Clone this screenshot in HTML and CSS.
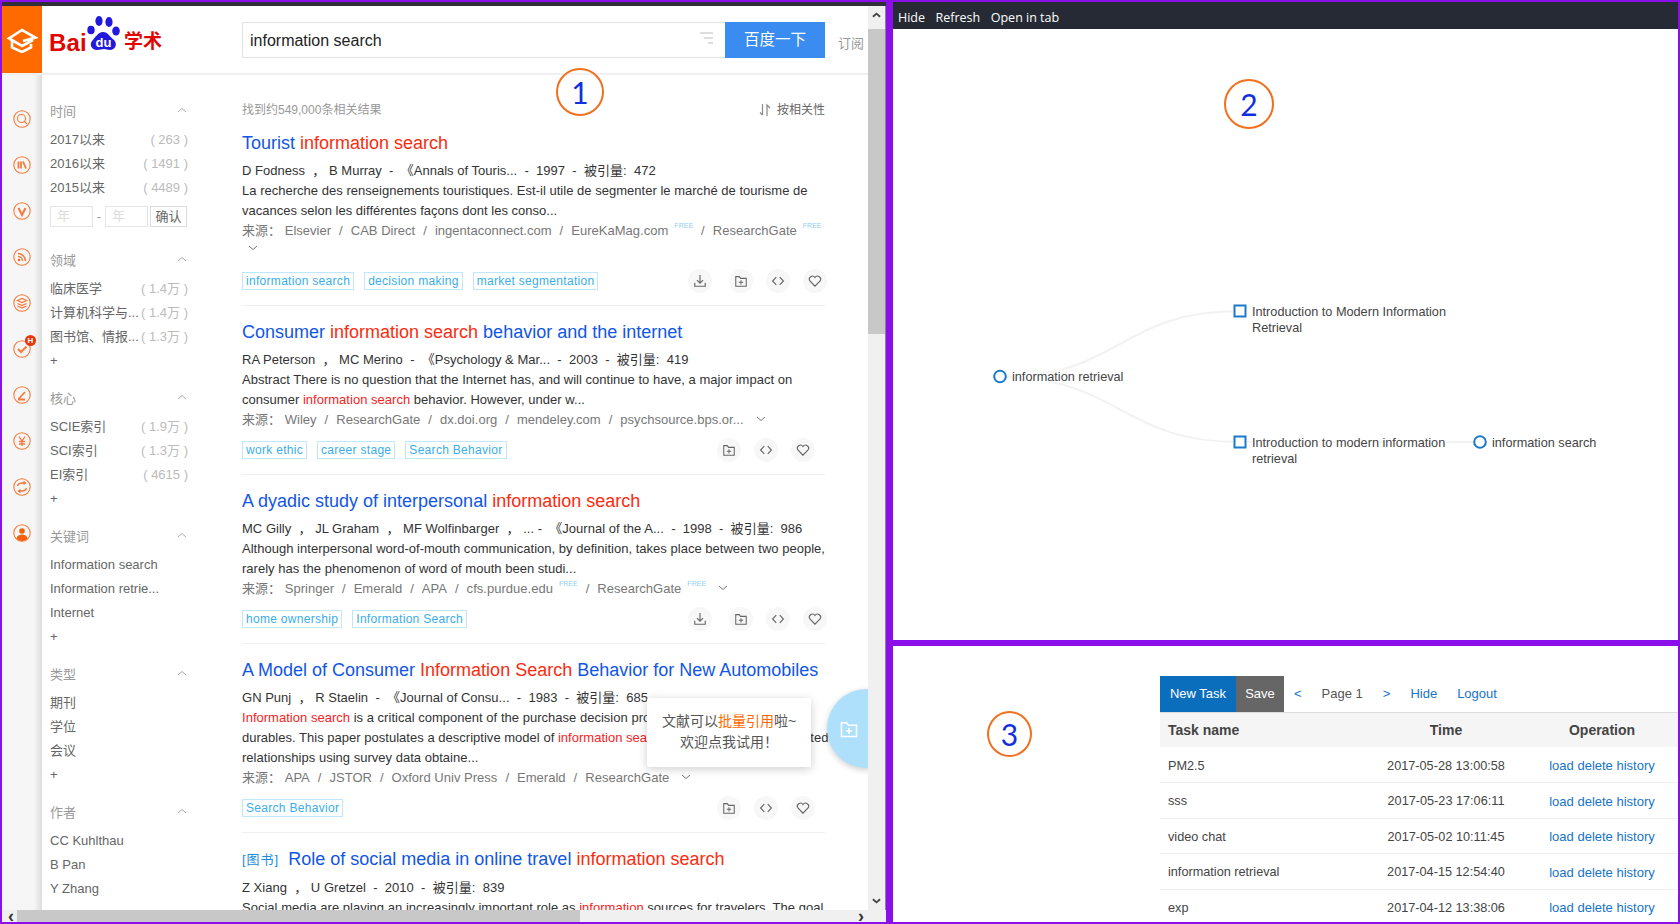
FILE: index.html
```html
<!DOCTYPE html>
<html lang="en">
<head>
    <meta charset="UTF-8">
    <meta name="viewport" content="width=device-width, initial-scale=1.0">
    <title>Literature search workspace</title>
    <link rel="stylesheet" href="styles.css">
</head>
<body>
<svg class="sprite" width="0" height="0">
    <symbol id="i-download" viewBox="0 0 16 16"><path d="M8 1v9M4.500 7 8 10.500 11.500 7M2 10v4h12v-4" fill="none" stroke="currentColor" stroke-width="1.300"/></symbol>
    <symbol id="i-folder" viewBox="0 0 16 16"><path d="M2 3h4l1.500 2H14v9H2zM8 7v5M5.500 9.500h5" fill="none" stroke="currentColor" stroke-width="1.200"/></symbol>
    <symbol id="i-code" viewBox="0 0 16 16"><path d="M6 3.500 1.800 8 6 12.500M10 3.500 14.200 8 10 12.500" fill="none" stroke="currentColor" stroke-width="1.300"/></symbol>
    <symbol id="i-heart" viewBox="0 0 16 16"><path d="M8 14 2.200 8A3.500 3.500 0 0 1 8 4a3.500 3.500 0 0 1 5.800 4z" fill="none" stroke="currentColor" stroke-width="1.300"/></symbol>
    <symbol id="i-up" viewBox="0 0 10 6"><path d="M1 5 5 1.500 9 5" fill="none" stroke="currentColor"/></symbol>
    <symbol id="i-down" viewBox="0 0 10 6"><path d="M1 1 5 4.500 9 1" fill="none" stroke="currentColor"/></symbol>
</svg>

<div class="frame">
    <div class="pane-left">
        <div class="viewport">
            <div class="page-head">
                <div class="brand-cell">
                    <svg width="32" height="26" viewBox="0 0 32 26"><path d="M27 13 16 19 3 11.500 16 3 29.500 10.500 17 14M6 13v7.500L16 25l9-4.500v-3.500" fill="none" stroke="#fff" stroke-width="2.600"/></svg>
                </div>
                <div class="logo">
                    <span class="logo-bai">Bai</span>
                    <svg class="logo-paw" width="34" height="38" viewBox="0 0 34 38">
                        <ellipse cx="4" cy="15" rx="3.700" ry="4.300" fill="#2319dc"/>
                        <ellipse cx="12" cy="6" rx="3.600" ry="5" fill="#2319dc"/>
                        <ellipse cx="22" cy="7" rx="3.600" ry="5" fill="#2319dc"/>
                        <ellipse cx="29" cy="16" rx="3.800" ry="4.500" fill="#2319dc"/>
                        <path d="M16 17c5 0 7 5 11 8 4 4 1 10-4 10-3 0-4-1-6-1s-4 1-7 1c-5 0-8-5-5-9 3-3 6-9 11-9z" fill="#2319dc"/>
                        <text x="16.500" y="32" class="logo-du">du</text>
                    </svg>
                    <span class="logo-xs">学术</span>
                </div>
                <div class="search">
                    <div class="search-box">
                        <span>information search</span>
                        <svg width="14" height="14" viewBox="0 0 14 14"><path d="M0 2h13M4 7h9M8 12h5" stroke="#ddd" stroke-width="2"/></svg>
                    </div>
                    <div class="search-btn">百度一下</div>
                </div>
                <div class="subscribe">订阅</div>
            </div>

            <div class="page-body">
                <div class="rail">
                    <svg class="rail-icon" viewBox="0 0 18 18"><circle cx="9" cy="9" r="8.200"/><circle cx="8.500" cy="8.500" r="4"/><path d="m11.500 11.500 2.500 2.500"/></svg>
                    <svg class="rail-icon" viewBox="0 0 18 18"><circle cx="9" cy="9" r="8.200"/><path d="M5.500 5.500v7M8 5.500v7M10 5.500l3 7" stroke-width="1.800"/></svg>
                    <svg class="rail-icon" viewBox="0 0 18 18"><circle cx="9" cy="9" r="8.200"/><path d="M5.500 6 9 13l3.500-7" stroke-width="2"/></svg>
                    <svg class="rail-icon" viewBox="0 0 18 18"><circle cx="9" cy="9" r="8.200"/><path d="M5 5.500c4 0 7.500 3.500 7.500 7.500M5 8.500c2.500 0 4.500 2 4.500 4.500" stroke-width="1.500"/><circle cx="6" cy="12" r="1.200" class="solid"/></svg>
                    <svg class="rail-icon" viewBox="0 0 18 18"><circle cx="9" cy="9" r="8.200"/><path d="m4.500 6.500 4.500-2 4.500 2-4.500 2zM4.500 9.500l4.500 2 4.500-2M4.500 12l4.500 2 4.500-2" stroke-width="1.300"/></svg>
                    <div class="rail-badged">
                        <svg class="rail-icon" viewBox="0 0 18 18"><circle cx="9" cy="9" r="8.200"/><path d="m5 9 3 3 5.500-5.500" stroke-width="2"/></svg>
                        <span class="badge">H</span>
                    </div>
                    <svg class="rail-icon" viewBox="0 0 18 18"><circle cx="9" cy="9" r="8.200"/><path d="M5.500 13 12 6M5 13.500h7" stroke-width="1.800"/></svg>
                    <svg class="rail-icon" viewBox="0 0 18 18"><circle cx="9" cy="9" r="8.200"/><path d="M6 4.500 9 9l3-4.500M9 9v5M6 9.500h6M6 12h6" stroke-width="1.300"/></svg>
                    <svg class="rail-icon" viewBox="0 0 18 18"><circle cx="9" cy="9" r="8.200"/><path d="M4.500 8c.5-2 2-3 4.500-3h3M10.500 3.500l2 1.500-2 1.500M13.500 10c-.5 2-2 3-4.500 3H6M7.500 11.500l-2 1.500 2 1.500" stroke-width="1.400"/></svg>
                    <svg class="rail-icon" viewBox="0 0 18 18"><circle cx="9" cy="9" r="8.200"/><circle cx="9" cy="7" r="2.800" class="solid"/><path d="M3.500 14.500c.5-3 3-4 5.500-4s5 1 5.500 4c-1.500 1.500-3.500 2.500-5.500 2.500s-4-1-5.500-2.500z" class="solid"/></svg>
                </div>

                <div class="facets">
                    <div class="facet facet-time">
                        <h4>时间<svg><use href="#i-up"/></svg></h4>
                        <div class="facet-row"><span>2017以来</span><em>( 263 )</em></div>
                        <div class="facet-row"><span>2016以来</span><em>( 1491 )</em></div>
                        <div class="facet-row"><span>2015以来</span><em>( 4489 )</em></div>
                        <div class="year-range">
                            <span class="year-input">年</span>
                            <span class="year-dash">-</span>
                            <span class="year-input">年</span>
                            <span class="year-ok">确认</span>
                        </div>
                    </div>
                    <div class="facet">
                        <h4>领域<svg><use href="#i-up"/></svg></h4>
                        <div class="facet-row"><span>临床医学</span><em>( 1.4万 )</em></div>
                        <div class="facet-row"><span>计算机科学与...</span><em>( 1.4万 )</em></div>
                        <div class="facet-row"><span>图书馆、情报...</span><em>( 1.3万 )</em></div>
                        <div class="facet-row">+</div>
                    </div>
                    <div class="facet">
                        <h4>核心<svg><use href="#i-up"/></svg></h4>
                        <div class="facet-row"><span>SCIE索引</span><em>( 1.9万 )</em></div>
                        <div class="facet-row"><span>SCI索引</span><em>( 1.3万 )</em></div>
                        <div class="facet-row"><span>EI索引</span><em>( 4615 )</em></div>
                        <div class="facet-row">+</div>
                    </div>
                    <div class="facet">
                        <h4>关键词<svg><use href="#i-up"/></svg></h4>
                        <div class="facet-row"><span>Information search</span></div>
                        <div class="facet-row"><span>Information retrie...</span></div>
                        <div class="facet-row"><span>Internet</span></div>
                        <div class="facet-row">+</div>
                    </div>
                    <div class="facet">
                        <h4>类型<svg><use href="#i-up"/></svg></h4>
                        <div class="facet-row"><span>期刊</span></div>
                        <div class="facet-row"><span>学位</span></div>
                        <div class="facet-row"><span>会议</span></div>
                        <div class="facet-row">+</div>
                    </div>
                    <div class="facet">
                        <h4>作者<svg><use href="#i-up"/></svg></h4>
                        <div class="facet-row"><span>CC Kuhlthau</span></div>
                        <div class="facet-row"><span>B Pan</span></div>
                        <div class="facet-row"><span>Y Zhang</span></div>
                    </div>
                </div>

                <div class="results">
                    <div class="stats">
                        <span>找到约549,000条相关结果</span>
                        <span class="sort"><svg width="12" height="14" viewBox="0 0 12 14"><path d="M3.500 1v11M1 9.500 3.500 12M8 13V2l3 3" fill="none" stroke="#888" stroke-width="1.200"/></svg>按相关性</span>
                    </div>

                    <div class="result">
                        <h3><a>Tourist <b>information search</b></a></h3>
                        <p>D Fodness &nbsp;， B Murray &nbsp;- &nbsp;《Annals of Touris... &nbsp;- &nbsp;1997 &nbsp;- &nbsp;被引量: &nbsp;472</p>
                        <p>La recherche des renseignements touristiques. Est-il utile de segmenter le marché de tourisme de<br>vacances selon les différentes façons dont les conso...</p>
                        <p class="sources">来源： <i>Elsevier</i>/<i>CAB Direct</i>/<i>ingentaconnect.com</i>/<i>EureKaMag.com</i><sup>FREE</sup>/<i>ResearchGate</i><sup>FREE</sup></p>
                        <div class="more-line"><svg class="chev"><use href="#i-down"/></svg></div>
                        <div class="result-foot">
                            <span class="tag">information search</span><span class="tag">decision making</span><span class="tag">market segmentation</span>
                            <span class="actions">
                                <span class="act act-dl"><svg><use href="#i-download"/></svg></span>
                                <span class="act"><svg><use href="#i-folder"/></svg></span>
                                <span class="act"><svg><use href="#i-code"/></svg></span>
                                <span class="act"><svg><use href="#i-heart"/></svg></span>
                            </span>
                        </div>
                    </div>

                    <div class="result">
                        <h3><a>Consumer <b>information search</b> behavior and the internet</a></h3>
                        <p>RA Peterson &nbsp;， MC Merino &nbsp;- &nbsp;《Psychology &amp; Mar... &nbsp;- &nbsp;2003 &nbsp;- &nbsp;被引量: &nbsp;419</p>
                        <p>Abstract There is no question that the Internet has, and will continue to have, a major impact on<br>consumer <b>information search</b> behavior. However, under w...</p>
                        <p class="sources">来源： <i>Wiley</i>/<i>ResearchGate</i>/<i>dx.doi.org</i>/<i>mendeley.com</i>/<i>psychsource.bps.or...</i><svg class="chev"><use href="#i-down"/></svg></p>
                        <div class="result-foot">
                            <span class="tag">work ethic</span><span class="tag">career stage</span><span class="tag">Search Behavior</span>
                            <span class="actions actions-short">
                                <span class="act"><svg><use href="#i-folder"/></svg></span>
                                <span class="act"><svg><use href="#i-code"/></svg></span>
                                <span class="act"><svg><use href="#i-heart"/></svg></span>
                            </span>
                        </div>
                    </div>

                    <div class="result">
                        <h3><a>A dyadic study of interpersonal <b>information search</b></a></h3>
                        <p>MC Gilly &nbsp;， JL Graham &nbsp;， MF Wolfinbarger &nbsp;， ... - &nbsp;《Journal of the A... &nbsp;- &nbsp;1998 &nbsp;- &nbsp;被引量: &nbsp;986</p>
                        <p>Although interpersonal word-of-mouth communication, by definition, takes place between two people,<br>rarely has the phenomenon of word of mouth been studi...</p>
                        <p class="sources">来源： <i>Springer</i>/<i>Emerald</i>/<i>APA</i>/<i>cfs.purdue.edu</i><sup>FREE</sup>/<i>ResearchGate</i><sup>FREE</sup><svg class="chev"><use href="#i-down"/></svg></p>
                        <div class="result-foot">
                            <span class="tag">home ownership</span><span class="tag">Information Search</span>
                            <span class="actions">
                                <span class="act act-dl"><svg><use href="#i-download"/></svg></span>
                                <span class="act"><svg><use href="#i-folder"/></svg></span>
                                <span class="act"><svg><use href="#i-code"/></svg></span>
                                <span class="act"><svg><use href="#i-heart"/></svg></span>
                            </span>
                        </div>
                    </div>

                    <div class="result">
                        <h3><a>A Model of Consumer <b>Information Search</b> Behavior for New Automobiles</a></h3>
                        <p>GN Punj &nbsp;， R Staelin &nbsp;- &nbsp;《Journal of Consu... &nbsp;- &nbsp;1983 &nbsp;- &nbsp;被引量: &nbsp;685</p>
                        <p><b>Information search</b> is a critical component of the purchase decision process for consumer<br>durables. This paper postulates a descriptive model of <b>information search</b> that is tested and estimated<br>relationships using survey data obtaine...</p>
                        <p class="sources">来源： <i>APA</i>/<i>JSTOR</i>/<i>Oxford Univ Press</i>/<i>Emerald</i>/<i>ResearchGate</i><svg class="chev"><use href="#i-down"/></svg></p>
                        <div class="result-foot">
                            <span class="tag">Search Behavior</span>
                            <span class="actions actions-short">
                                <span class="act"><svg><use href="#i-folder"/></svg></span>
                                <span class="act"><svg><use href="#i-code"/></svg></span>
                                <span class="act"><svg><use href="#i-heart"/></svg></span>
                            </span>
                        </div>
                    </div>

                    <div class="result">
                        <h3><span class="book">[图书]</span><a>Role of social media in online travel <b>information search</b></a></h3>
                        <p>Z Xiang &nbsp;， U Gretzel &nbsp;- &nbsp;2010 &nbsp;- &nbsp;被引量: &nbsp;839</p>
                        <p>Social media are playing an increasingly important role as <b>information</b> sources for travelers. The goal</p>
                    </div>
                </div>
            </div>

            <div class="mark mark-1">1</div>
            <div class="cite-tip">文献可以<span>批量引用</span>啦~<br>欢迎点我试用！</div>
            <div class="cite-fab"><svg width="22" height="20" viewBox="0 0 16 16"><use href="#i-folder"/></svg></div>
        </div>
        <div class="vbar">
            <svg class="bar-arrow" width="9" height="6"><use href="#i-up"/></svg>
            <div class="vbar-thumb"></div>
            <svg class="bar-arrow vbar-end" width="9" height="6"><use href="#i-down"/></svg>
        </div>
        <div class="hbar">
            <span class="hbar-arrow">‹</span>
            <div class="hbar-thumb"></div>
            <span class="hbar-arrow">›</span>
        </div>
    </div>

    <div class="pane-right">
        <div class="tree-pane">
            <div class="tree-bar"><span>Hide</span><span>Refresh</span><span>Open in tab</span></div>
            <div class="tree-canvas">
                <svg class="tree" viewBox="893 29 785 611" width="785" height="611">
                    <path class="link" d="M1000 377C1120 377 1120 311 1240 311"/>
                    <path class="link" d="M1000 377C1120 377 1120 442 1240 442"/>
                    <path class="link" d="M1240 442H1480"/>
                    <circle class="node" cx="1000" cy="376.500" r="5.800"/>
                    <text x="1012" y="381">information retrieval</text>
                    <rect class="node" x="1234.500" y="305.500" width="11" height="11"/>
                    <text x="1252" y="315.500">Introduction to Modern Information</text>
                    <text x="1252" y="331.500">Retrieval</text>
                    <rect class="node" x="1234.500" y="436.500" width="11" height="11"/>
                    <text x="1252" y="446.500">Introduction to modern information</text>
                    <text x="1252" y="462.500">retrieval</text>
                    <circle class="node" cx="1480" cy="442" r="5.800"/>
                    <text x="1492" y="446.500">information search</text>
                </svg>
                <div class="mark mark-2">2</div>
            </div>
        </div>
        <div class="task-pane">
            <div class="mark mark-3">3</div>
            <div class="task-panel">
                <div class="task-bar">
                    <span class="btn btn-new">New Task</span>
                    <span class="btn btn-save">Save</span>
                    <a class="pg-prev">&lt;</a>
                    <span class="pg-label">Page 1</span>
                    <a class="pg-next">&gt;</a>
                    <a class="pg-hide">Hide</a>
                    <a>Logout</a>
                </div>
                <table class="tasks">
                    <thead>
                        <tr><th>Task name</th><th>Time</th><th>Operation</th></tr>
                    </thead>
                    <tbody>
                        <tr><td>PM2.5</td><td>2017-05-28 13:00:58</td><td><a>load delete history</a></td></tr>
                        <tr><td>sss</td><td>2017-05-23 17:06:11</td><td><a>load delete history</a></td></tr>
                        <tr><td>video chat</td><td>2017-05-02 10:11:45</td><td><a>load delete history</a></td></tr>
                        <tr><td>information retrieval</td><td>2017-04-15 12:54:40</td><td><a>load delete history</a></td></tr>
                        <tr><td>exp</td><td>2017-04-12 13:38:06</td><td><a>load delete history</a></td></tr>
                    </tbody>
                </table>
            </div>
        </div>
    </div>
</div>
</body>
</html>
```

FILE: styles.css
```css
* {
    box-sizing: border-box;
}
html, body {
    height: 100%;
}
body {
    margin: 0;
    overflow: hidden;
    background-color: #8a0fe8;
    font-family: "Liberation Sans", "Noto Sans CJK SC", sans-serif;
    font-size: 13px;
    color: #333;
}
.sprite {
    position: absolute;
}
.frame {
    display: flex;
    gap: 7px;
    height: 924px;
    padding: 2px;
}

/* left pane: the search site with its scrollbars */
.pane-left {
    display: grid;
    grid-template-columns: 866px 18px;
    grid-template-rows: 904px 12px;
    width: 884px;
    border-top: 4px solid #30303a;
    background: #f0f0f0;
}
.viewport {
    position: relative;
    overflow: hidden;
    background: #fff;
}
.vbar {
    display: flex;
    flex-direction: column;
    align-items: center;
    padding-top: 6px;
    border-right: 1px solid #888;
    color: #444;
}
.bar-arrow {
    flex: none;
    stroke-width: 2;
}
.vbar-thumb {
    align-self: stretch;
    height: 305px;
    margin-top: 11px;
    background: #c8c8c8;
}
.vbar-end {
    margin-top: auto;
    margin-bottom: 6px;
}
.hbar {
    grid-column: 1 / 3;
    display: flex;
    align-items: center;
    justify-content: space-between;
    position: relative;
    padding: 0 22px 0 6px;
    color: #333;
    font-size: 18px;
    font-weight: bold;
    line-height: 12px;
}
.hbar-thumb {
    position: absolute;
    left: 15px;
    top: 0;
    width: 563px;
    height: 12px;
    background: #c8c8c8;
}

.page-head {
    display: flex;
    height: 69px;
    border-bottom: 2px solid #f0f0f0;
}
.brand-cell {
    display: flex;
    align-items: center;
    justify-content: center;
    flex: none;
    width: 40px;
    background: #ff6a00;
}
.logo {
    display: flex;
    align-items: center;
    flex: none;
    width: 200px;
    padding-left: 7px;
    padding-top: 1px;
}
.logo-bai {
    margin-top: 5px;
    font-size: 24px;
    font-weight: bold;
    letter-spacing: .2px;
    color: #e10601;
}
.logo-paw {
    margin-top: -13px;
}
.logo-du {
    font-size: 13px;
    font-weight: bold;
    text-anchor: middle;
    fill: #fff;
}
.logo-xs {
    margin-top: -1px;
    margin-left: 3px;
    font-size: 19px;
    font-weight: bold;
    color: #e10601;
}
.search {
    display: flex;
    width: 583px;
    height: 36px;
    margin-top: 16px;
}
.search-box {
    display: flex;
    align-items: flex-start;
    justify-content: space-between;
    flex: 1;
    padding: 9px 11px 0 7px;
    border: 1px solid #e2e2e2;
    border-right: 0;
    font-size: 16px;
    color: #222;
}
.search-box svg {
    margin-top: -1px;
}
.search-btn {
    width: 100px;
    background: #3b8cf0;
    color: #fff;
    font-size: 15.500px;
    line-height: 36px;
    text-align: center;
}
.subscribe {
    margin: 27px 0 0 13px;
    color: #999;
}

.page-body {
    display: flex;
    height: 900px;
}
.rail {
    display: flex;
    flex-direction: column;
    align-items: center;
    gap: 28px;
    flex: none;
    width: 40px;
    padding-top: 35px;
    background: linear-gradient(to right, #f6f6f6 80%, #dcdcdc);
}
.rail-icon {
    display: block;
    width: 18px;
    height: 18px;
    fill: none;
    stroke: #f57a3c;
    stroke-width: 1.100;
}
.rail-icon .solid {
    fill: #f4600c;
    stroke: none;
}
.rail-badged {
    position: relative;
}
.badge {
    position: absolute;
    top: -5px;
    left: 12px;
    width: 11px;
    height: 11px;
    border-radius: 50%;
    background: #e8360c;
    color: #fff;
    font-size: 8px;
    font-weight: bold;
    line-height: 11px;
    text-align: center;
}

.facets {
    flex: none;
    width: 200px;
    padding: 25px 0 0 8px;
}
.facet {
    width: 138px;
    margin-bottom: 14px;
}
.facet h4 {
    display: flex;
    align-items: center;
    justify-content: space-between;
    height: 20px;
    margin: 0 0 8px;
    padding-right: 1px;
    font-size: 13px;
    font-weight: normal;
    color: #999;
}
.facet h4 svg {
    width: 10px;
    height: 6px;
    color: #aaa;
}
.facet-row {
    display: flex;
    justify-content: space-between;
    height: 24px;
    line-height: 24px;
    color: #666;
    white-space: nowrap;
}
.facet-row em {
    flex: none;
    font-style: normal;
    color: #bbb;
}
.year-range {
    display: flex;
    align-items: center;
    height: 24px;
    margin-top: 4px;
    margin-bottom: 21px;
    color: #ddd;
}
.year-input {
    width: 43px;
    height: 21px;
    padding-left: 6px;
    border: 1px solid #e4e4e4;
    line-height: 18px;
}
.year-dash {
    width: 12px;
    color: #999;
    text-align: center;
}
.year-ok {
    width: 37px;
    height: 21px;
    margin-left: 2px;
    border: 1px solid #ddd;
    color: #666;
    line-height: 19px;
    text-align: center;
}

.results {
    flex: none;
    width: 583px;
    padding-top: 25px;
}
.stats {
    display: flex;
    justify-content: space-between;
    height: 20px;
    margin-bottom: 11px;
    font-size: 12px;
    color: #999;
    line-height: 20px;
}
.sort {
    display: flex;
    align-items: center;
    gap: 6px;
    color: #666;
}
.result {
    padding-bottom: 12px;
    margin-bottom: 14px;
    border-bottom: 1px solid #f0f0f0;
}
.result h3 {
    margin: 0 0 6px;
    font-size: 18px;
    font-weight: normal;
    line-height: 24px;
    white-space: nowrap;
}
.result h3 a {
    color: #1256e6;
}
.result h3 b {
    font-weight: normal;
    color: #fa2c10;
}
.book {
    margin-right: 9px;
    font-size: 13px;
    letter-spacing: 1px;
    color: #1b8bdc;
    vertical-align: 1px;
}
.result p {
    margin: 0;
    letter-spacing: .02px;
    line-height: 20px;
    white-space: nowrap;
}
.result p b {
    font-weight: normal;
    color: #f5241e;
}
.sources {
    color: #777;
}
.sources i {
    font-style: normal;
    margin: 0 8px;
}
.sources i:first-of-type {
    margin-left: 0;
}
.sources sup {
    margin: 0 8px 0 -2px;
    font-size: 7px;
    color: #8fd0f0;
    vertical-align: 7px;
    line-height: 0;
}
.chev {
    width: 10px;
    height: 6px;
    margin-left: 4px;
    color: #777;
    vertical-align: 2px;
}
.more-line {
    height: 20px;
    padding-left: 2px;
}
.result-foot {
    display: flex;
    align-items: center;
    height: 24px;
    margin-top: 8px;
}
.tag {
    height: 18px;
    margin-right: 10px;
    padding: 0 3px;
    border: 1px solid #bfe8fb;
    font-size: 12px;
    letter-spacing: .3px;
    line-height: 16px;
    color: #39aeea;
}
.actions {
    display: flex;
    gap: 13px;
    margin-left: auto;
    margin-right: -2px;
}
.actions-short {
    margin-right: 10px;
}
.act {
    display: flex;
    align-items: center;
    justify-content: center;
    width: 24px;
    height: 24px;
    border-radius: 50%;
    background: #f7f7f7;
    color: #666;
}
.act-dl {
    margin-right: 4px;
}
.act svg {
    width: 14px;
    height: 14px;
}

.mark {
    position: absolute;
    display: flex;
    align-items: center;
    justify-content: center;
    width: 48px;
    height: 48px;
    border: 2px solid #f0701e;
    border-radius: 50%;
    background: transparent;
    color: #1030e0;
    font-family: Lato, sans-serif;
    font-size: 30px;
    line-height: 1;
}
.mark-1 {
    left: 554px;
    top: 62px;
}
.mark-2 {
    left: 331px;
    top: 50px;
    width: 50px;
    height: 50px;
}
.mark-3 {
    left: 94px;
    top: 65px;
    width: 45px;
    height: 46px;
}
.cite-tip {
    position: absolute;
    left: 645px;
    top: 692px;
    width: 164px;
    height: 69px;
    padding-top: 13px;
    border-radius: 2px;
    background: #fff;
    box-shadow: 0 2px 10px rgba(0, 0, 0, .2);
    color: #555;
    font-size: 14px;
    line-height: 21px;
    text-align: center;
}
.cite-tip span {
    color: #ff6a00;
}
.cite-fab {
    position: absolute;
    left: 825px;
    top: 683px;
    display: flex;
    align-items: center;
    justify-content: center;
    width: 79px;
    height: 79px;
    padding-right: 36px;
    border-radius: 50%;
    background: #aee0fc;
    box-shadow: 0 2px 6px rgba(0, 0, 0, .2);
    color: #fff;
}

/* right column */
.pane-right {
    display: flex;
    flex-direction: column;
    gap: 6px;
    width: 785px;
}
.tree-pane {
    display: flex;
    flex-direction: column;
    height: 638px;
    background: #fff;
}
.tree-bar {
    display: flex;
    align-items: center;
    gap: 10.500px;
    flex: none;
    height: 27px;
    padding: 3px 0 0 5px;
    background: #252a35;
    color: #fff;
    font-family: "Open Sans", sans-serif;
    font-size: 12.500px;
}
.tree-canvas {
    position: relative;
    flex: 1;
}
.tree {
    display: block;
}
.tree text {
    font-size: 12.700px;
    fill: #444;
    paint-order: stroke;
    stroke: #fff;
    stroke-width: 3px;
}
.link {
    fill: none;
    stroke: #f2f2f2;
    stroke-width: 2;
}
.node {
    fill: #fff;
    stroke: #1b7bc8;
    stroke-width: 2;
}

.task-pane {
    position: relative;
    flex: 1;
    padding: 30px 0 0 267px;
    overflow: hidden;
    background: #fff;
}
.task-bar {
    display: flex;
    align-items: center;
    height: 37px;
    padding-bottom: 2px;
    border-bottom: 1px solid #ddd;
    color: #555;
}
.task-bar a {
    color: #1773c8;
}
.btn {
    height: 36px;
    align-self: flex-start;
    color: #fff;
    line-height: 36px;
    text-align: center;
}
.btn-new {
    width: 76px;
    background: #0a6ebd;
}
.btn-save {
    width: 48px;
    background: #666;
}
.pg-prev {
    margin-left: 10px;
}
.pg-label {
    margin-left: 20px;
}
.pg-next {
    margin-left: 20px;
}
.pg-hide {
    margin: 0 20px 0 20px;
}
.tasks {
    width: 518px;
    border-collapse: collapse;
    table-layout: fixed;
}
.tasks th:first-child,
.tasks td:first-child {
    width: 206px;
    padding-left: 8px;
    text-align: left;
}
.tasks th:nth-child(2) {
    width: 160px;
}
.tasks th {
    height: 34px;
    padding-bottom: 2px;
    background: #f5f5f5;
    color: #444;
    font-size: 14px;
    text-align: center;
}
.tasks td {
    height: 35.500px;
    padding: 2px 0 0;
    border-bottom: 1px solid #f0f0f0;
    color: #444;
    font-size: 12.700px;
    text-align: center;
    white-space: nowrap;
}
.tasks td a {
    color: #1773c8;
    font-size: 13px;
}
```
